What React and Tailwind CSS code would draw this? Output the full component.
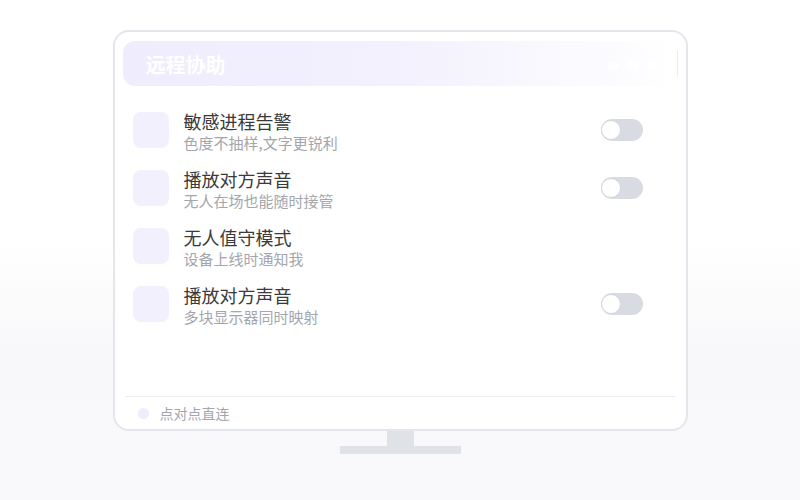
import React from "react";

const rows = [
  { title: "敏感进程告警", sub: "色度不抽样,文字更锐利", toggle: true },
  { title: "播放对方声音", sub: "无人在场也能随时接管", toggle: true },
  { title: "无人值守模式", sub: "设备上线时通知我", toggle: false },
  { title: "播放对方声音", sub: "多块显示器同时映射", toggle: true },
];

function Toggle() {
  return (
    <div className="mt-[8px] flex h-[22px] w-[42px] items-center rounded-full bg-[#d8dbe1]">
      <div className="h-[20px] w-[20px] rounded-full border-[1.5px] border-[#d3d6dc] bg-white" />
    </div>
  );
}

export default function App() {
  return (
    <div
      className="flex h-[500px] w-[800px] flex-col items-center bg-[linear-gradient(to_bottom,#ffffff_0%,#ffffff_48%,#f8f8fa_70%,#f9f9fb_100%)] pt-[30px]"
      style={{ fontFamily: '"Noto Sans CJK SC", "Noto Sans", sans-serif' }}
    >
      <div className="flex h-[401px] w-[575px] flex-col rounded-[16px] border-2 border-[#e4e6eb] bg-white">
        <div className="mx-[8px] mt-[9px] flex h-[45px] items-center rounded-[12px] bg-[linear-gradient(to_right,#efecfd_0%,#f3f1fd_50%,#fbfbff_85%,#ffffff_100%)] pl-[23px]">
          <span className="mt-[2px] text-[20px] font-bold leading-none text-white">远程协助</span>
          <div className="ml-auto mt-[3px] flex items-center gap-[8px] pr-[18px]">
            <div className="h-[9px] w-[12px] rounded-full bg-white/70" />
            <div className="h-[9px] w-[12px] rounded-full bg-white/70" />
            <div className="h-[9px] w-[12px] rounded-full bg-white/70" />
          </div>
          <div className="h-[27px] w-px bg-[#ebebf3]" />
        </div>

        <div className="mt-[25px] flex flex-col gap-[14px] pl-[18px] pr-[43px]">
          {rows.map((r, i) => (
            <div key={i} className="flex h-[44px] items-start">
              <div className="mt-[1px] h-[36px] w-[36px] rounded-[8px] bg-[#f2f0fd]" />
              <div className="ml-[15px] -mt-[2px] flex flex-col">
                <span className="text-[18px] leading-[24px] text-[#3a3a3a]">{r.title}</span>
                <span className="text-[15px] leading-[20px] text-[#a3a6ad]">{r.sub}</span>
              </div>
              <div className="ml-auto">{r.toggle ? <Toggle /> : null}</div>
            </div>
          ))}
        </div>

        <div className="flex-1" />
        <div className="mx-[10px] h-px bg-[#eceef2]" />
        <div className="flex h-[32px] items-center pl-[23px]">
          <div className="h-[11px] w-[11px] rounded-full bg-[#efecfd]" />
          <span className="ml-[11px] text-[14px] leading-none text-[#a3a6ad]">点对点直连</span>
        </div>
      </div>
      <div className="h-[15px] w-[27px] bg-[#dfe2e7]" />
      <div className="h-[8px] w-[121px] bg-[#dfe2e7]" />
    </div>
  );
}
